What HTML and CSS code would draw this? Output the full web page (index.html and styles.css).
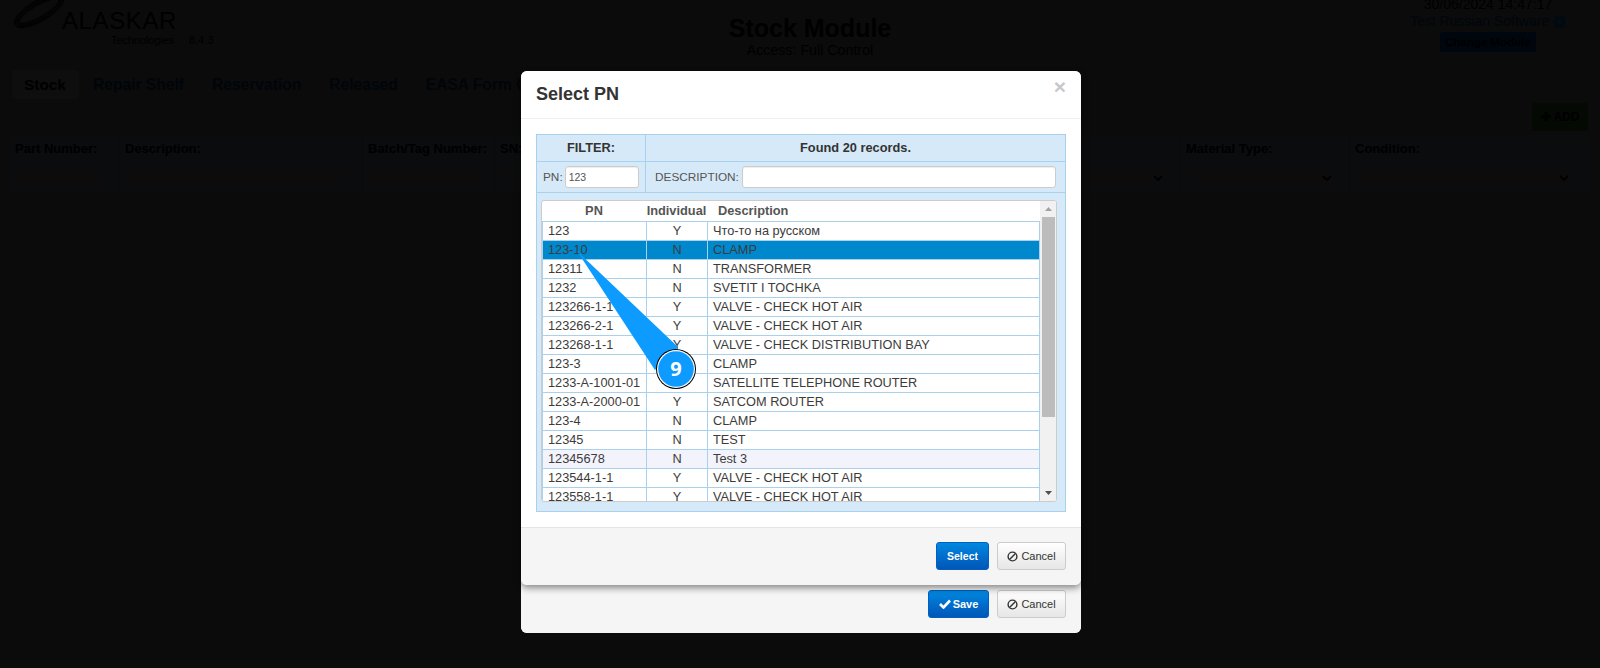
FILE: index.html
```html
<!DOCTYPE html>
<html lang="en">
<head>
<meta charset="utf-8">
<title>Stock Module</title>
<link rel="stylesheet" href="styles.css">
</head>
<body>
<div class="page">
  <header class="top">
    <div class="brand">
      <svg class="swoosh" width="56" height="32" viewBox="0 0 56 32" fill="none" stroke="#000" stroke-width="0.800">
        <ellipse cx="26" cy="14" rx="28" ry="10.500" transform="rotate(-30 26 14)"/>
        <ellipse cx="26" cy="14" rx="26.600" ry="9.300" transform="rotate(-30 26 14)"/>
        <ellipse cx="26" cy="14" rx="25.200" ry="8.100" transform="rotate(-30 26 14)"/>
        <ellipse cx="26" cy="14" rx="23.800" ry="6.900" transform="rotate(-30 26 14)"/>
        <ellipse cx="26" cy="14" rx="22.400" ry="5.700" transform="rotate(-30 26 14)"/>
      </svg>
      <div class="brandtext">
        <div class="brandname">ALASKAR</div>
        <div class="brandsub"><span>Technologies</span><span class="ver">8.4.3</span></div>
      </div>
    </div>
    <div class="title">
      <div class="h1">Stock Module</div>
      <div class="access">Access: Full Control</div>
    </div>
    <div class="user">
      <div>30/06/2024 14:47:17</div>
      <div class="uname">Test Russian Software <svg width="13" height="13" viewBox="0 0 16 16"><path fill="#000a14" fill-rule="evenodd" d="M6.500 0h3l.4 2.200 1.300.6L13 1.500l2.100 2.100-1.300 1.900.6 1.300 2.200.4v3l-2.200.4-.6 1.300 1.300 1.900-2.100 2.100-1.900-1.300-1.300.6-.4 2.200h-3l-.4-2.200-1.300-.6L3 15.300.9 13.200l1.300-1.900-.6-1.300L0 9.500v-3l2.200-.4.6-1.300L1.500 3 3.600.9l1.900 1.300 1.300-.6zM8 5.200a2.800 2.800 0 1 0 0 5.600 2.800 2.800 0 0 0 0-5.600z"/></svg></div>
      <div class="changemod">Change Module</div>
    </div>
  </header>
  <nav class="tabs">
    <span class="tab on">Stock</span><span class="tab">Repair Shelf</span><span class="tab">Reservation</span><span class="tab">Released</span><span class="tab">EASA Form One</span>
  </nav>
  <div class="addrow"><span class="add">✚ ADD</span></div>
  <div class="filters">
    <div class="fcell"><b>Part Number:</b><i class="fld"></i></div>
    <div class="fcell"><b>Description:</b><i class="fld"></i></div>
    <div class="fcell"><b>Batch/Tag Number:</b><i class="fld"></i></div>
    <div class="fcell"><b>SN:</b><i class="fld"></i></div>
    <div class="fcell"><b></b><i class="fld sel"><svg class="chev" width="10" height="6" viewBox="0 0 10 6"><path d="M1 1l4 4 4-4" fill="none" stroke="#000" stroke-width="1.800"/></svg></i></div>
    <div class="fcell"><b>Material Type:</b><i class="fld sel"><svg class="chev" width="10" height="6" viewBox="0 0 10 6"><path d="M1 1l4 4 4-4" fill="none" stroke="#000" stroke-width="1.800"/></svg></i></div>
    <div class="fcell last"><b>Condition:</b><i class="fld sel"><svg class="chev" width="10" height="6" viewBox="0 0 10 6"><path d="M1 1l4 4 4-4" fill="none" stroke="#000" stroke-width="1.800"/></svg></i></div>
  </div>
</div>

<div class="modal back">
  <div class="mspacer"></div>
  <div class="mfoot backfoot">
    <span class="btn primary save"><svg width="12" height="10" viewBox="0 0 12 10"><path d="M1 5l3.500 3.500L11 1.500" fill="none" stroke="#fff" stroke-width="2.600"/></svg>Save</span>
    <span class="btn plain"><svg width="11" height="11" viewBox="0 0 11 11"><circle cx="5.500" cy="5.500" r="4.400" fill="none" stroke="#333" stroke-width="1.400"/><path d="M2.500 8.500l6-6" stroke="#333" stroke-width="1.400"/></svg>Cancel</span>
  </div>
</div>

<div class="modal front">
  <div class="mhead"><h4>Select PN</h4><span class="close">×</span></div>
  <div class="mbody">
    <div class="panel">
      <div class="prow r1">
        <div class="pleft strong">FILTER:</div>
        <div class="pright strong">Found 20 records.</div>
      </div>
      <div class="prow r2">
        <div class="pleft inline"><label>PN:</label><input class="tinput pn" value="123"></div>
        <div class="pright inline"><label>DESCRIPTION:</label><input class="tinput desc"></div>
      </div>
      <div class="listwrap">
        <div class="listbox">
          <div class="listmain">
            <div class="lhead"><span class="c1">PN</span><span class="c2">Individual</span><span class="c3">Description</span></div>
            <table class="grid">
              <tbody>
                <tr><td class="c1">123</td><td class="c2">Y</td><td class="c3">Что-то на русском</td></tr>
                <tr class="sel"><td class="c1">123-10</td><td class="c2">N</td><td class="c3">CLAMP</td></tr>
                <tr><td class="c1">12311</td><td class="c2">N</td><td class="c3">TRANSFORMER</td></tr>
                <tr><td class="c1">1232</td><td class="c2">N</td><td class="c3">SVETIT I TOCHKA</td></tr>
                <tr><td class="c1">123266-1-1</td><td class="c2">Y</td><td class="c3">VALVE - CHECK HOT AIR</td></tr>
                <tr><td class="c1">123266-2-1</td><td class="c2">Y</td><td class="c3">VALVE - CHECK HOT AIR</td></tr>
                <tr><td class="c1">123268-1-1</td><td class="c2">Y</td><td class="c3">VALVE - CHECK DISTRIBUTION BAY</td></tr>
                <tr><td class="c1">123-3</td><td class="c2">N</td><td class="c3">CLAMP</td></tr>
                <tr><td class="c1">1233-A-1001-01</td><td class="c2">Y</td><td class="c3">SATELLITE TELEPHONE ROUTER</td></tr>
                <tr><td class="c1">1233-A-2000-01</td><td class="c2">Y</td><td class="c3">SATCOM ROUTER</td></tr>
                <tr><td class="c1">123-4</td><td class="c2">N</td><td class="c3">CLAMP</td></tr>
                <tr><td class="c1">12345</td><td class="c2">N</td><td class="c3">TEST</td></tr>
                <tr class="hov"><td class="c1">12345678</td><td class="c2">N</td><td class="c3">Test 3</td></tr>
                <tr><td class="c1">123544-1-1</td><td class="c2">Y</td><td class="c3">VALVE - CHECK HOT AIR</td></tr>
                <tr><td class="c1">123558-1-1</td><td class="c2">Y</td><td class="c3">VALVE - CHECK HOT AIR</td></tr>
              </tbody>
            </table>
          </div>
          <div class="sbar">
            <svg class="arr" width="7" height="4" viewBox="0 0 7 4"><path d="M3.500 0L7 4H0z" fill="#a3a3a3"/></svg>
            <div class="thumb"></div>
            <svg class="arr dn" width="7" height="4" viewBox="0 0 7 4"><path d="M0 0h7L3.500 4z" fill="#505050"/></svg>
          </div>
        </div>
      </div>
    </div>
  </div>
  <div class="mfoot">
    <span class="btn primary sel-btn">Select</span>
    <span class="btn plain"><svg width="11" height="11" viewBox="0 0 11 11"><circle cx="5.500" cy="5.500" r="4.400" fill="none" stroke="#333" stroke-width="1.400"/><path d="M2.500 8.500l6-6" stroke="#333" stroke-width="1.400"/></svg>Cancel</span>
  </div>
</div>

<svg class="callout" width="1600" height="668" viewBox="0 0 1600 668">
  <path d="M577 251L678 347L655 370Z" fill="#0d9bff"/>
  <circle cx="676" cy="369" r="20" fill="#000"/>
  <circle cx="676" cy="369" r="19" fill="#fff"/>
  <circle cx="676" cy="369" r="17.800" fill="#0d9bff"/>
  <text x="676" y="376" class="num" text-anchor="middle">9</text>
</svg>
</body>
</html>
```
FILE: styles.css
```css
* { box-sizing: border-box; }
html, body { margin: 0; height: 100%; }
body {
  background: #0b0b0b;
  font-family: "Liberation Sans", Arial, sans-serif;
  font-size: 14px;
  color: #000;
  overflow: hidden;
  position: relative;
}
.page { height: 668px; padding: 0 10px; }

.top { display: grid; grid-template-columns: 1fr 1fr 1fr; height: 70px; }
.brand { display: flex; padding: 0 0 0 3px; align-items: flex-start; }
.swoosh { margin-top: -3px; flex: none; overflow: visible; }
.brandtext { margin-left: -7px; }
.brandname { font-size: 24px; line-height: 24px; margin-top: 9px; letter-spacing: 0.6px; width: 116px; color: #000; }
.brandsub { font-size: 11px; line-height: 12px; margin: 1px 0 0 49px; color: #000; white-space: nowrap; letter-spacing: -0.1px; }
.ver { margin-left: 15px; letter-spacing: 0.3px; font-size: 10.500px; }
.title { text-align: center; padding: 13px 0 0 0; margin-left: 20px; }
.h1 { font-size: 25px; font-weight: 700; line-height: 30px; }
.access { font-size: 14px; line-height: 16px; margin-top: -1px; letter-spacing: 0.1px; }
.user { text-align: center; justify-self: end; width: 194px; margin-right: 5px; margin-top: -4px; font-size: 14px; line-height: 17px; color: #000; }
.uname { color: #00060c; white-space: nowrap; }
.uname svg { vertical-align: -2px; }
.changemod {
  width: 96px; height: 20px; margin: 2px auto 0; border-radius: 3px;
  background: #00060e; color: #000; font: 700 11.500px/20px "Liberation Sans", sans-serif;
}

.tabs { height: 29px; display: flex; margin-left: 2px; }
.tab { padding: 0 14px; font-weight: 700; font-size: 15.600px; line-height: 29px; color: #00050a; white-space: nowrap; }
.tab.on { color: #000; background: #0e0e0e; border-radius: 3px; width: 67px; padding: 0 12px; font-size: 15.400px; }

.addrow { height: 36px; display: flex; justify-content: flex-end; align-items: flex-end; padding: 0 2px 4px 0; }
.add {
  width: 56px; height: 28px; border-radius: 3px; background: #040904; color: #000;
  font-weight: 700; font-size: 12px; line-height: 28px; text-align: center;
}
.filters {
  display: grid; grid-template-columns: 110px 243px 132px 160px 526px 169px 240px;
  height: 58px; background: #0a0c0e; color: #000;
}
.fcell { padding: 5px 14px 0 5px; border-right: 1px solid #080a0c; }
.fcell.last { padding-right: 18px; border-right: 0; }
.fcell b { display: block; font-size: 13px; line-height: 18px; height: 28px; white-space: nowrap; }
.fld { display: flex; align-items: center; justify-content: flex-end; height: 20px; background: #0c0c0c; padding-right: 3px; }
.chev { flex: none; }

.modal {
  position: absolute; left: 521px; width: 560px; top: 71px; background: #fff;
  border-radius: 6px; display: flex; flex-direction: column;
}
.back { height: 562px; background: #f5f5f5; }
.mspacer { flex: 1; }
.backfoot { height: 48px; padding-top: 5px; background: none; border: 0; }
.front { height: 514px; box-shadow: 0 3px 7px rgba(0, 0, 0, .45); }
.mhead { height: 48px; border-bottom: 1px solid #eee; padding: 13px 15px 0; position: relative; }
.mhead h4 { margin: 0; font-size: 18px; line-height: 20px; color: #333; font-weight: 700; }
.close { position: absolute; right: 15px; top: 5px; font-size: 21px; line-height: 21px; font-weight: 700; color: #c8c8c8; }
.mbody { height: 409px; padding: 15px 15px 0; border-bottom: 1px solid #e5e5e5; }
.panel { height: 378px; border: 1px solid #a9d0ec; background: #d6e9f8; display: flex; flex-direction: column; }
.prow { display: grid; grid-template-columns: 109px 1fr; border-bottom: 1px solid #a9d0ec; }
.r1 { height: 27px; }
.r2 { height: 31px; }
.pleft { border-right: 1px solid #a9d0ec; }
.strong { font-weight: 700; font-size: 12.800px; color: #333; text-align: center; line-height: 26px; }
.inline { display: flex; align-items: center; font-size: 11.800px; color: #555; padding-bottom: 1px; }
.pleft.inline { padding-left: 6px; }
.pright.inline { padding-left: 9px; }
.inline label { white-space: nowrap; }
.tinput {
  height: 22px; border: 1px solid #ccc; border-radius: 3px; background: #fff; padding: 0 3px; margin: 0;
  font: 10.500px "Liberation Sans", sans-serif; color: #555; box-shadow: inset 0 1px 1px rgba(0, 0, 0, .075);
}
.pn { width: 74px; margin-left: 2px; }
.desc { width: 314px; margin-left: 3px; }
.listwrap { padding: 7px 8px 0 4px; flex: 1; }
.listbox {
  height: 302px; display: flex; background: #fff; border-radius: 3px;
  border: 1px solid #ccc; overflow: hidden;
}
.listmain { width: 498px; flex: none; overflow: hidden; }
.lhead { display: flex; height: 20px; line-height: 19px; font-weight: 700; font-size: 12.800px; color: #555; }
.lhead .c1 { width: 104px; text-align: center; }
.lhead .c2 { width: 61px; text-align: center; }
.lhead .c3 { padding-left: 11px; }
.grid { border-collapse: collapse; table-layout: fixed; width: 498px; font-size: 12.750px; color: #3c3c3c; }
.grid td { height: 19px; padding: 0 5px 1px; border: 1px solid #a9d0ec; line-height: 16px; white-space: nowrap; }
.grid .c1 { width: 104px; }
.grid .c2 { width: 61px; text-align: center; }
.grid .sel td { background: #0088cc; }
.grid .hov td { background: #f3f3fc; }
.sbar { width: 16px; flex: none; background: #f1f1f1; display: flex; flex-direction: column; align-items: center; }
.arr { flex: none; margin-top: 6px; }
.thumb { width: 13px; height: 200px; background: #bcbcbc; margin-top: 6px; }
.arr.dn { margin-top: auto; margin-bottom: 6px; }

.mfoot {
  height: 57px; background: #f5f5f5; padding: 14px 15px 0; display: flex; justify-content: flex-end; gap: 8px;
  border-radius: 0 0 6px 6px;
}
.btn {
  height: 28px; border-radius: 3px; font-size: 11px; display: flex; align-items: center; justify-content: center; gap: 3px; white-space: nowrap;
}
.primary {
  background: linear-gradient(#0088e0, #0055b8); border: 1px solid #0060c0; color: #fff; font-weight: 700; width: 61px;
}
.save { gap: 2px; }
.sel-btn { width: 53px; font-size: 10.500px; }
.plain {
  width: 69px; border: 1px solid #ccc; color: #333;
  background: linear-gradient(#fff, #e6e6e6);
}

.callout { position: absolute; left: 0; top: 0; pointer-events: none; }
.num { font: 700 20px "Open Sans", "DejaVu Sans", sans-serif; fill: #fff; }
```
